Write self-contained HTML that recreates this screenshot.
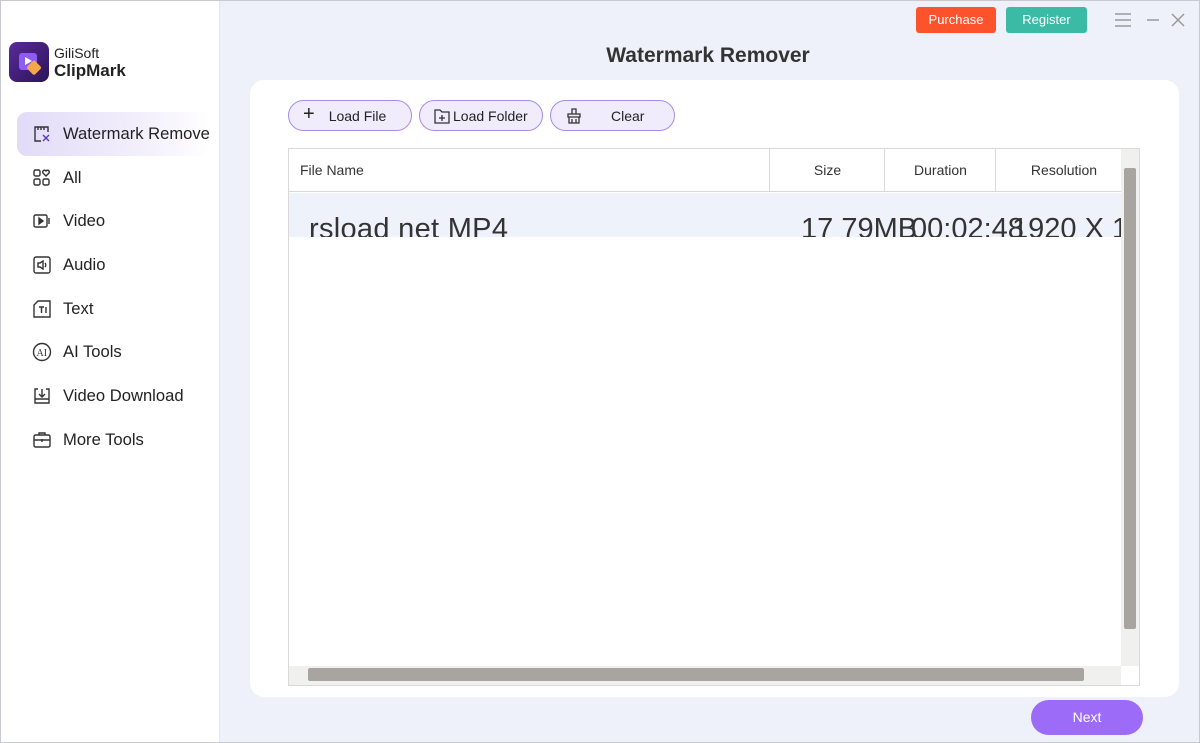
<!DOCTYPE html>
<html><head><meta charset="utf-8"><style>
*{margin:0;padding:0;box-sizing:border-box}
body{width:1200px;height:743px;overflow:hidden;font-family:"Liberation Sans",sans-serif;background:#eef1f9;position:relative;color:#222}
.abs{position:absolute}
.side{left:0;top:0;width:220px;height:743px;background:#fff;border-right:1px solid #e3e5ec}
.nav{left:17px;width:200px;height:44px;display:flex;align-items:center;font-size:16.6px;color:#222;white-space:nowrap;overflow:hidden}
.nav svg{margin-left:15px;margin-right:11px;flex:none}
.btn{top:100px;height:31px;border:1.5px solid #a98ae6;border-radius:16px;background:#f1ecfb;font-size:14px;display:flex;align-items:center;color:#222}
</style></head><body>
<div class="abs" style="left:0;top:0;width:1200px;height:743px;border:1px solid #c8cad0;z-index:10;pointer-events:none"></div>
<div class="abs side"></div>
<div class="abs" style="left:9px;top:42px;width:40px;height:40px;border-radius:8px;background:linear-gradient(135deg,#5a2a9a,#2b1458)">
<svg width="40" height="40"><rect x="10" y="11" width="18" height="17" rx="3" fill="#8e5cf0"/><path d="M16 15l7 4-7 4z" fill="#fff"/><rect x="20" y="20" width="11" height="11" rx="2" fill="#f5a84a" transform="rotate(45 25 25)"/></svg></div>
<div class="abs" style="left:54px;top:45px;font-size:14px;line-height:16px">GiliSoft</div>
<div class="abs" style="left:54px;top:61px;font-size:17px;font-weight:bold;line-height:19px">ClipMark</div>
<div class="abs nav" style="top:112px;width:193px;border-radius:10px;background:linear-gradient(90deg,#e2dbf8,#f4f1fc 70%,#fff)"><svg width="20" height="20" fill="none" stroke="#333" stroke-width="1.4"><path d="M3 8V3h13v5M3 8v9h6"/><path d="M6 3v3M9 3v3M12 3v3"/><path d="M11 11l6 6M17 11l-6 6" stroke="#5a3ab8"/></svg>Watermark Remove</div>
<div class="abs nav" style="top:156px"><svg width="20" height="20" fill="none" stroke="#333" stroke-width="1.4"><rect x="2" y="2" width="6" height="6" rx="1.5"/><rect x="2" y="11" width="6" height="6" rx="1.5"/><rect x="11" y="11" width="6" height="6" rx="1.5"/><path d="M14 8l-3-3a1.7 1.7 0 013-2 1.7 1.7 0 013 2z"/></svg>All</div>
<div class="abs nav" style="top:199px"><svg width="20" height="20" fill="none" stroke="#333" stroke-width="1.4"><rect x="2" y="4" width="13" height="12" rx="1.5"/><path d="M7 7l4 3-4 3z" fill="#333"/><path d="M17 7v6"/></svg>Video</div>
<div class="abs nav" style="top:243px"><svg width="20" height="20" fill="none" stroke="#333" stroke-width="1.4"><rect x="2" y="2" width="16" height="16" rx="2"/><path d="M6 8h2l3-2v8l-3-2H6z"/><path d="M13 8a3 3 0 010 4"/></svg>Audio</div>
<div class="abs nav" style="top:287px"><svg width="20" height="20" fill="none" stroke="#333" stroke-width="1.4"><path d="M6 2h12v16H2V6z"/><path d="M7 8h5M9.5 8v6M14 8v6"/></svg>Text</div>
<div class="abs nav" style="top:330px"><svg width="20" height="20" fill="none" stroke="#333" stroke-width="1.4"><circle cx="10" cy="10" r="8.5"/><text x="4.5" y="14" font-size="10" font-family="Liberation Serif" fill="#333" stroke="none">AI</text></svg>AI Tools</div>
<div class="abs nav" style="top:374px"><svg width="20" height="20" fill="none" stroke="#333" stroke-width="1.4"><path d="M6 3H3v14h14V3h-3"/><path d="M10 3v8M7 8l3 3 3-3M3 13h14"/></svg>Video Download</div>
<div class="abs nav" style="top:418px"><svg width="20" height="20" fill="none" stroke="#333" stroke-width="1.4"><rect x="2" y="5" width="16" height="12" rx="1.5"/><path d="M7 5V3h6v2M2 10h16M10 9v3"/></svg>More Tools</div>

<div class="abs" style="left:916px;top:7px;width:80px;height:26px;background:#fd532d;border-radius:3px;color:#fff;font-size:13px;text-align:center;line-height:26px">Purchase</div>
<div class="abs" style="left:1006px;top:7px;width:81px;height:26px;background:#3bbba5;border-radius:3px;color:#fff;font-size:13px;text-align:center;line-height:26px">Register</div>
<svg class="abs" style="left:1112px;top:10px" width="80" height="20" stroke="#999" stroke-width="1.5" fill="none"><path d="M3 4h16M3 10h16M3 16h16M35 10h12M60 4l12 12M72 4L60 16"/></svg>

<div class="abs" style="left:0;width:1416px;top:44px;text-align:center;font-size:21px;font-weight:bold;color:#333">Watermark Remover</div>
<div class="abs" style="left:250px;top:80px;width:929px;height:617px;background:#fff;border-radius:14px"></div>

<div class="abs btn" style="left:288px;width:124px"><span style="font-size:20px;margin:0 14px 2px 14px">+</span>Load File</div>
<div class="abs btn" style="left:419px;width:124px"><svg style="margin:0 2px 0 13px" width="18" height="18" fill="none" stroke="#333" stroke-width="1.3"><path d="M2 3h5l2 2h7v11H2z"/><path d="M9 8v6M6 11h6"/></svg>Load Folder</div>
<div class="abs btn" style="left:550px;width:125px"><svg style="margin:0 28px 0 14px" width="18" height="18" fill="none" stroke="#333" stroke-width="1.3"><path d="M7 2h4v5H7zM3 7h12v3H3zM4 10v6h10v-6M7 12v4M11 12v4"/></svg>Clear</div>

<div class="abs" style="left:288px;top:148px;width:852px;height:538px;border:1px solid #d9d9d9;background:#fff;overflow:hidden">
 <div class="abs" style="left:0;top:0;width:832px;height:43px;border-bottom:1px solid #d9d9d9;font-size:14px;color:#333">
  <div class="abs" style="left:11px;top:13px">File Name</div>
  <div class="abs" style="left:480px;top:0;width:1px;height:42px;background:#d9d9d9"></div>
  <div class="abs" style="left:481px;width:115px;top:13px;text-align:center">Size</div>
  <div class="abs" style="left:595px;top:0;width:1px;height:42px;background:#d9d9d9"></div>
  <div class="abs" style="left:596px;width:111px;top:13px;text-align:center">Duration</div>
  <div class="abs" style="left:706px;top:0;width:1px;height:42px;background:#d9d9d9"></div>
  <div class="abs" style="left:707px;width:136px;top:13px;text-align:center">Resolution</div>
 </div>
 <div class="abs" style="left:0;top:44px;width:832px;height:44px;background:#eef2fa;overflow:hidden;font-size:29px;color:#333;white-space:nowrap">
  <div class="abs" style="left:20px;top:20px;letter-spacing:0.3px">rsload net MP4</div>
  <div class="abs" style="left:512px;top:20px">17 79MB</div>
  <div class="abs" style="left:622px;top:20px">00:02:48</div>
  <div class="abs" style="left:723px;top:20px">1920 X 1</div>
 </div>
 <div class="abs" style="left:832px;top:0;width:19px;height:517px;background:#f0f0ef"></div>
 <div class="abs" style="left:835px;top:19px;width:12px;height:461px;background:#a8a5a0;border-radius:2px"></div>
 <div class="abs" style="left:0;top:517px;width:832px;height:19px;background:#f0f0ef"></div>
 <div class="abs" style="left:19px;top:519px;width:776px;height:13px;background:#a8a5a0;border-radius:2px"></div>
</div>

<div class="abs" style="left:1031px;top:700px;width:112px;height:35px;border-radius:18px;background:#9c6bf7;color:#fff;font-size:14px;text-align:center;line-height:35px">Next</div>
</body></html>
